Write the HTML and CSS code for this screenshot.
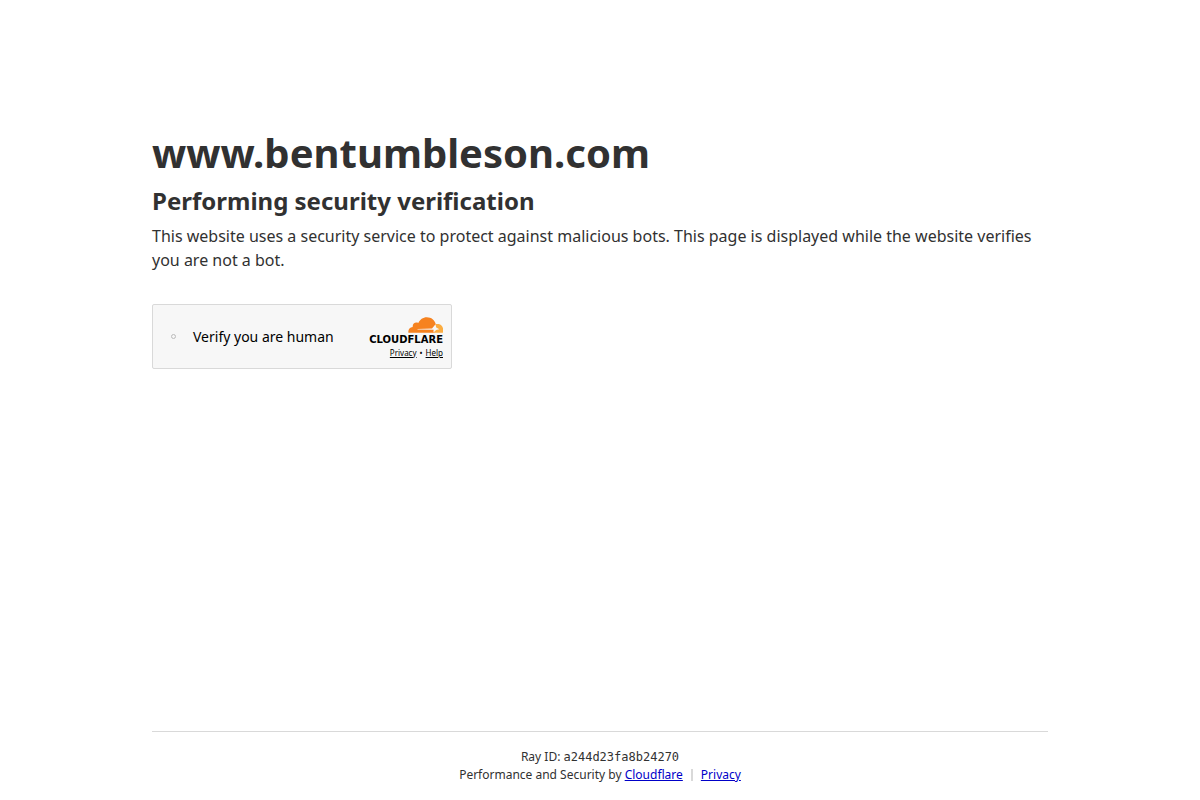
FILE: index.html
```html
<!DOCTYPE html>
<html lang="en">
<head>
    <meta charset="UTF-8">
    <meta name="viewport" content="width=device-width, initial-scale=1.0">
    <title>Just a moment...</title>
    <link rel="stylesheet" href="styles.css">
</head>
<body>
    <main class="content">
        <h1>www.bentumbleson.com</h1>
        <h2>Performing security verification</h2>
        <p>This website uses a security service to protect against malicious bots. This page is displayed while the website verifies you are not a bot.</p>

        <div class="widget">
            <div class="verify">
                <input type="checkbox" id="verify">
                <label for="verify">Verify you are human</label>
            </div>
            <div class="branding">
                <svg class="cloud" width="35" height="16" viewBox="0 0 35 16" aria-hidden="true">
                    <path fill="#fbad41" d="M27.4 7.3 C28.4 6.9 29.6 6.8 30.6 7 C33.5 7.5 35.2 10 35.2 13 C35.2 14 35.1 15 34.9 15.8 H24.5 Z"/>
                    <path fill="#f6821f" d="M.4 15.8 C-.1 12.7 1.6 10.3 4.7 10 C4.4 6.8 7.4 4.6 10.3 6.1 C11.8 2.4 15 .2 18.8 .2 C23.4 .2 26.8 3 27.8 7.2 L26.2 11.3 L27.1 13.3 L25.9 15.8 Z"/>
                    <path fill="#f7f7f7" d="M9.5 11.9 L24 11.5 L27.5 7.2 L28.2 10.6 L31.4 12.2 L28.1 13 L25.4 15.8 L25.6 12.8 L9.5 12.4 Z"/>
                </svg>
                <span class="wordmark">CLOUDFLARE</span>
                <div class="terms">
                    <a href="#privacy">Privacy</a><span>•</span><a href="#help">Help</a>
                </div>
            </div>
        </div>
    </main>

    <footer class="footer">
        <div>Ray ID: <code>a244d23fa8b24270</code></div>
        <div class="footer-links">
            <span>Performance and Security by <a href="#cloudflare">Cloudflare</a></span>
            <span class="divider"></span>
            <a href="#footer-privacy">Privacy</a>
        </div>
    </footer>
</body>
</html>
```

FILE: styles.css
```css
* {
    box-sizing: border-box;
    margin: 0;
    padding: 0;
}

body {
    display: flex;
    flex-direction: column;
    min-height: 100vh;
    background-color: #fff;
    color: #313131;
    font-family: "Noto Sans", sans-serif;
    font-size: 16px;
    line-height: 24px;
}

.content {
    flex: 1;
    width: 100%;
    max-width: 960px;
    margin: 0 auto;
    padding: 123px 32px 0;
}

h1 {
    font-size: 40px;
    line-height: 60px;
}

h2 {
    margin-bottom: 5px;
    font-size: 24px;
    line-height: 36px;
}

.widget {
    display: flex;
    align-items: center;
    justify-content: space-between;
    width: 300px;
    height: 65px;
    margin-top: 32px;
    padding: 0 8px 0 18px;
    border: 1px solid #d9d9d9;
    border-radius: 2px;
    background-color: #f7f7f7;
    color: #000;
}

.verify {
    display: flex;
    align-items: center;
    gap: 17px;
    font-size: 14px;
}

.verify input {
    width: 5px;
    height: 5px;
    border: 1px solid #bbb;
    border-radius: 50%;
    appearance: none;
}

.branding {
    display: flex;
    flex-direction: column;
    align-items: flex-end;
    padding-top: 2px;
}

.cloud {
    display: block;
}

.wordmark {
    font-family: "DejaVu Sans", sans-serif;
    font-size: 10px;
    font-weight: 700;
    line-height: 14px;
}

.terms {
    display: flex;
    gap: 3px;
    font-size: 8px;
    line-height: 12px;
}

.terms a {
    color: #000;
}

.footer {
    width: calc(100% - 64px);
    max-width: 896px;
    margin: 0 auto;
    padding: 16px 0;
    border-top: 1px solid #d9d9d9;
    font-size: 12px;
    line-height: 18px;
    text-align: center;
}

.footer code {
    font-family: "DejaVu Sans Mono", monospace;
    font-size: 12px;
    line-height: 16px;
}

.footer-links {
    display: flex;
    align-items: center;
    justify-content: center;
    gap: 8px;
}

.footer-links a {
    color: #0000c8;
}

.divider {
    width: 2px;
    height: 12px;
    background-color: #d9d9d9;
}
```
